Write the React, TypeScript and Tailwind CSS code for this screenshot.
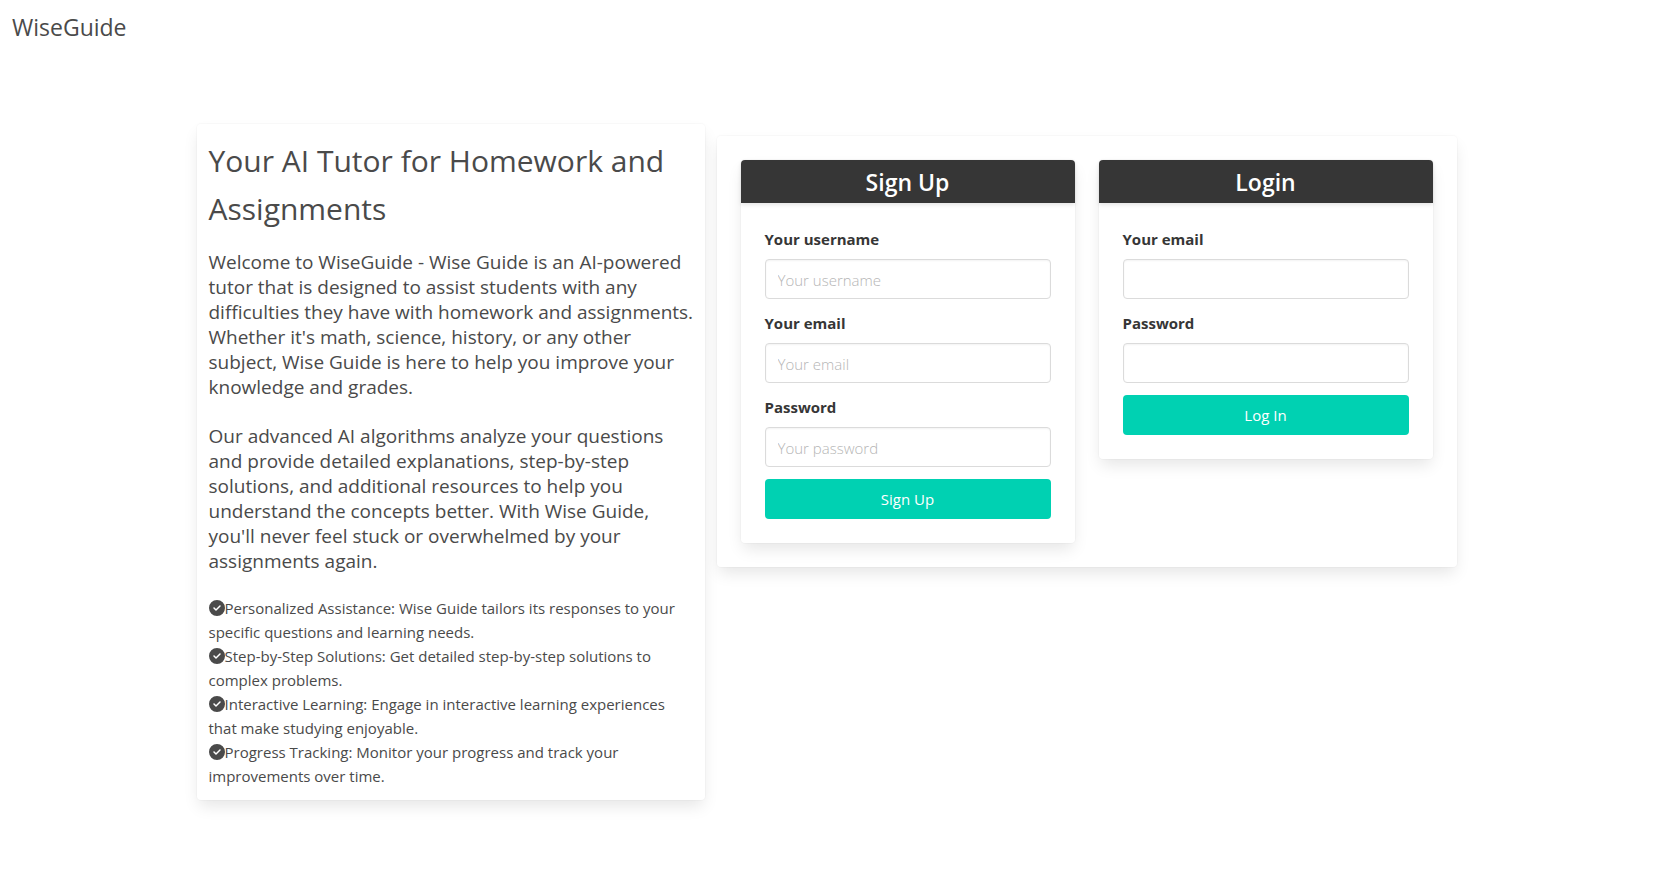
import { useId } from "react";
import { FaCircleCheck } from "react-icons/fa6";

const CARD =
  "rounded bg-white shadow-[0_8px_16px_-2px_rgba(10,10,10,0.1),0_0_0_1px_rgba(10,10,10,0.02)]";

const FEATURES = [
  "Personalized Assistance: Wise Guide tailors its responses to your specific questions and learning needs.",
  "Step-by-Step Solutions: Get detailed step-by-step solutions to complex problems.",
  "Interactive Learning: Engage in interactive learning experiences that make studying enjoyable.",
  "Progress Tracking: Monitor your progress and track your improvements over time.",
];

type FieldProps = { label: string; type: string; placeholder?: string };

function Field({ label, type, placeholder }: FieldProps) {
  const id = useId();
  return (
    <div className="mb-3">
      <label htmlFor={id} className="mb-2 block leading-6 font-bold text-[#363636]">
        {label}
      </label>
      <input
        id={id}
        type={type}
        placeholder={placeholder}
        className="block h-10 w-full rounded border border-[#dbdbdb] bg-white px-3 pt-0.5 text-[#363636] shadow-[inset_0_1px_2px_rgba(10,10,10,0.05)] outline-none placeholder:font-light placeholder:text-[#b5b5b5] focus:border-[#485fc7]"
      />
    </div>
  );
}

type FormCardProps = { title: string; action: string; fields: FieldProps[] };

function FormCard({ title, action, fields }: FormCardProps) {
  return (
    <section className={`${CARD} min-w-0 flex-1`}>
      <header className="rounded-t bg-[#363636] pt-[9px] pb-[7px] shadow-[0_2px_4px_rgba(10,10,10,0.1)]">
        <h2 className="text-center text-[23px] leading-[27px] font-semibold text-white">{title}</h2>
      </header>
      <form className="p-6" onSubmit={(e) => e.preventDefault()}>
        {fields.map((field) => (
          <Field key={field.label} {...field} />
        ))}
        <button
          type="submit"
          className="block h-10 w-full cursor-pointer rounded bg-[#00d1b2] text-white hover:bg-[#00c4a7]"
        >
          {action}
        </button>
      </form>
    </section>
  );
}

export default function App() {
  return (
    <div className="min-h-screen bg-white font-['Open_Sans','Noto_Sans',sans-serif] text-[15px] leading-6 text-[#4a4a4a]">
      <nav className="flex h-[54px] items-center px-3">
        <a href="#" className="text-[23px] leading-9">
          WiseGuide
        </a>
      </nav>
      <main className="mx-auto grid max-w-[1344px] grid-cols-[508fr_740fr] items-start gap-3 pt-[70px] pr-12 pb-12 pl-9">
        <article className={`${CARD} min-w-0 pt-[13px] pr-2 pb-3 pl-3`}>
          <h1 className="mb-[17px] text-[30px] leading-[48px]">
            Your AI Tutor for Homework and Assignments
          </h1>
          <p className="mb-6 text-[19px] leading-[25px]">
            Welcome to WiseGuide - Wise Guide is an AI-powered tutor that is designed to assist
            students with any difficulties they have with homework and assignments. Whether it's
            math, science, history, or any other subject, Wise Guide is here to help you improve
            your knowledge and grades.
          </p>
          <p className="mb-[22px] text-[19px] leading-[25px]">
            Our advanced AI algorithms analyze your questions and provide detailed explanations,
            step-by-step solutions, and additional resources to help you understand the concepts
            better. With Wise Guide, you'll never feel stuck or overwhelmed by your assignments
            again.
          </p>
          <ul>
            {FEATURES.map((feature) => (
              <li key={feature}>
                <FaCircleCheck className="inline size-4 align-[-2px]" aria-hidden="true" />
                {feature}
              </li>
            ))}
          </ul>
        </article>
        <div className={`${CARD} mt-3 flex min-w-0 items-start gap-6 p-6`}>
          <FormCard
            title="Sign Up"
            action="Sign Up"
            fields={[
              { label: "Your username", type: "text", placeholder: "Your username" },
              { label: "Your email", type: "email", placeholder: "Your email" },
              { label: "Password", type: "password", placeholder: "Your password" },
            ]}
          />
          <FormCard
            title="Login"
            action="Log In"
            fields={[
              { label: "Your email", type: "email" },
              { label: "Password", type: "password" },
            ]}
          />
        </div>
      </main>
    </div>
  );
}
